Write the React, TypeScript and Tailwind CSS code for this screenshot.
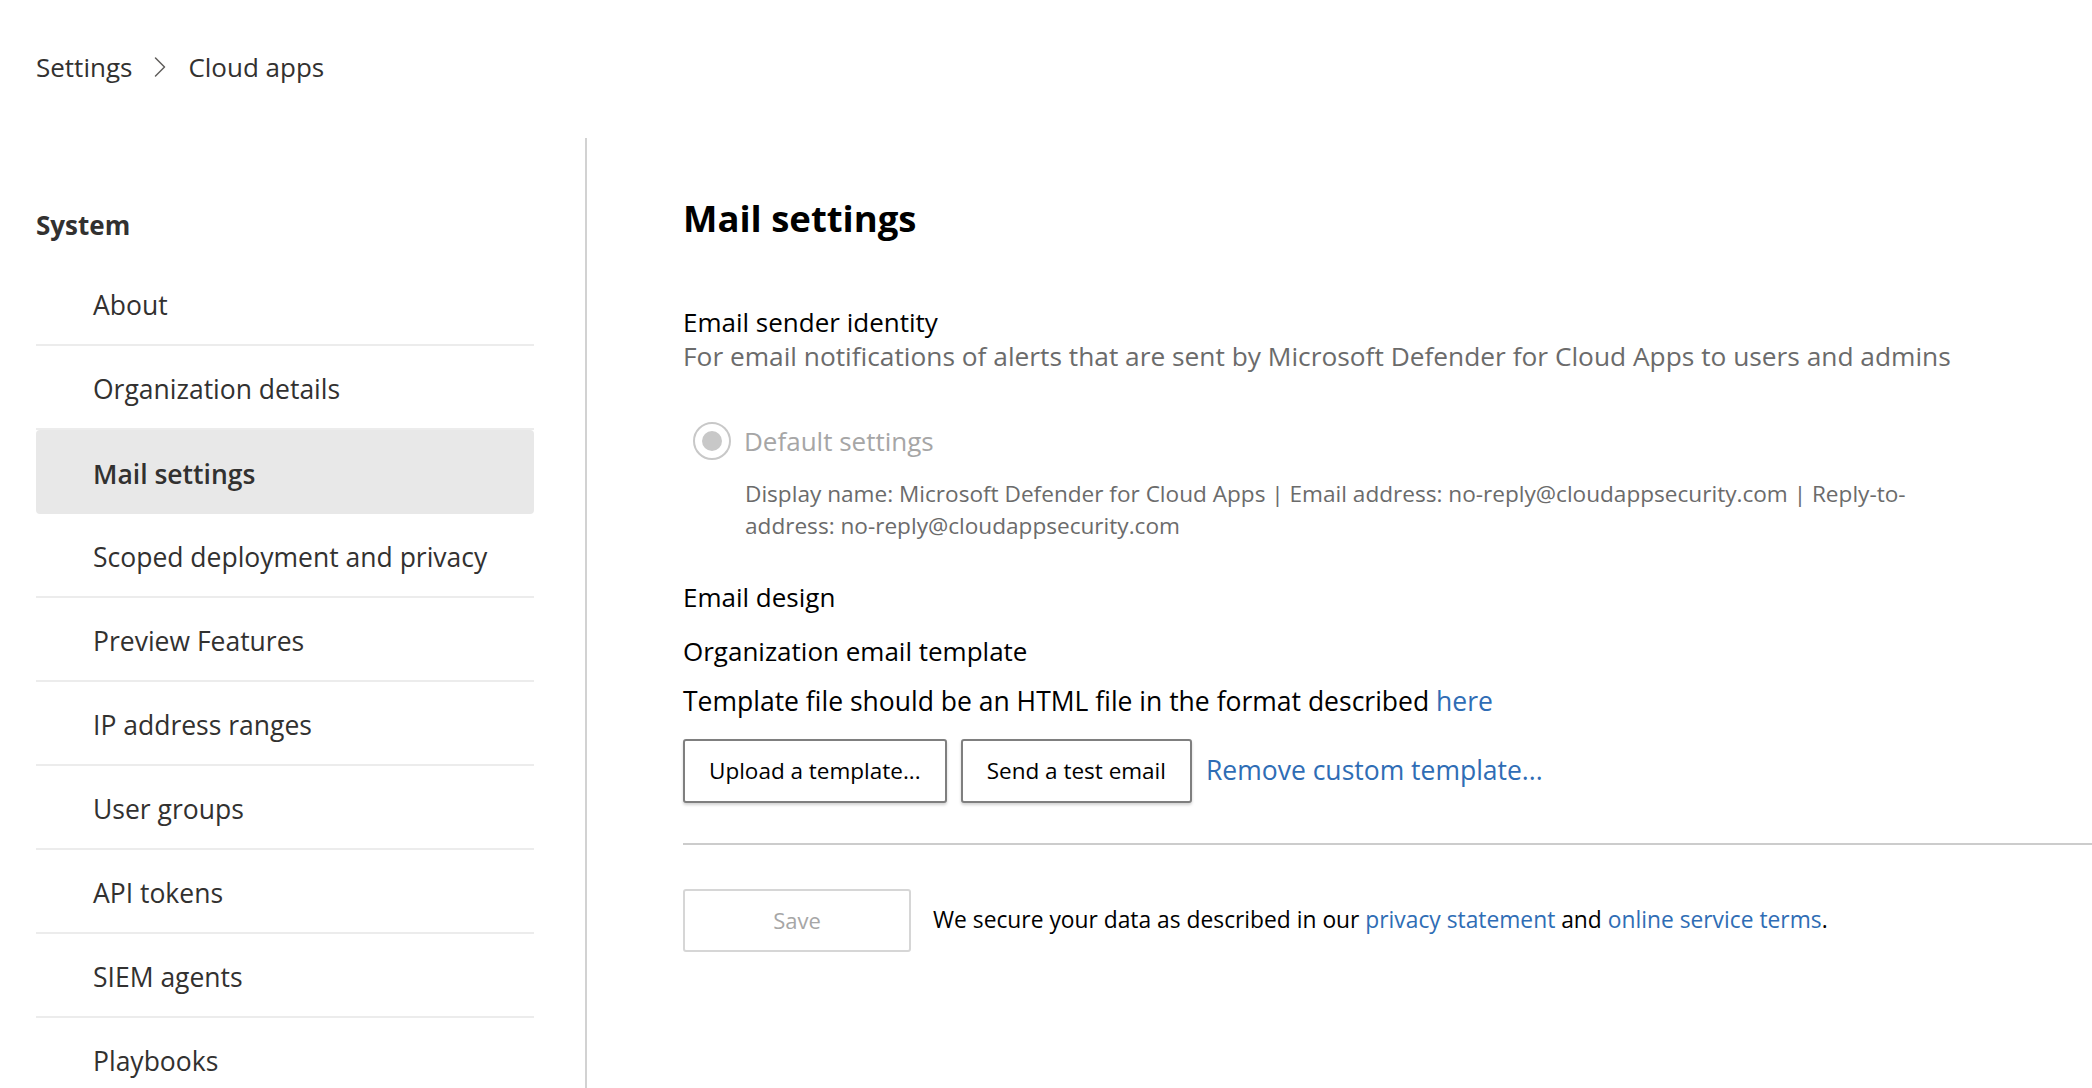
import { ChevronRight } from "lucide-react";

const navItems = [
  "About",
  "Organization details",
  "Mail settings",
  "Scoped deployment and privacy",
  "Preview Features",
  "IP address ranges",
  "User groups",
  "API tokens",
  "SIEM agents",
  "Playbooks",
];

function NavItem({ label, active }: { label: string; active?: boolean }) {
  return (
    <li
      className={
        active
          ? "h-[84px] flex items-center pl-[57px] pt-[5px] bg-[#e8e8e8] rounded-[4px] font-semibold text-[#323130]"
          : "h-[84px] flex items-center pl-[57px] pt-[5px] border-b-2 border-[#ececec] text-[#323130]"
      }
    >
      {label}
    </li>
  );
}

function Radio() {
  return (
    <span className="w-[38px] h-[38px] rounded-full border-2 border-[#c8c8c8] flex items-center justify-center shrink-0">
      <span className="w-[20px] h-[20px] rounded-full bg-[#c8c8c8]" />
    </span>
  );
}

export default function App() {
  return (
    <div className="min-h-screen bg-white text-black font-['Open_Sans',sans-serif] overflow-hidden">
      <header className="h-[138px] pb-[4px] pl-[36px] flex items-center gap-[10px] text-[26px] text-[#323130]">
        <span>Settings</span>
        <ChevronRight className="w-[36px] h-[36px] text-[#605e5c]" strokeWidth={1} />
        <span>Cloud apps</span>
      </header>

      <div className="flex">
        <aside className="w-[587px] shrink-0 border-r-2 border-[#d2d2d2] pl-[36px] pr-[51px]">
          <h2 className="mt-[69px] mb-[19px] leading-[36px] text-[26px] font-bold text-[#323130]">
            System
          </h2>
          <ul className="text-[26.5px]">
            {navItems.map((item) => (
              <NavItem key={item} label={item} active={item === "Mail settings"} />
            ))}
          </ul>
        </aside>

        <main className="flex-1 pl-[96px]">
          <h1 className="mt-[58px] leading-[44px] text-[36.5px] font-bold">Mail settings</h1>

          <section className="mt-[65px]">
            <h3 className="text-[26px] leading-[34px]">Email sender identity</h3>
            <p className="text-[26.3px] leading-[34px] text-[#6b6b6b]">
              For email notifications of alerts that are sent by Microsoft Defender for Cloud Apps to users and admins
            </p>

            <div className="mt-[48px] pl-[10px] flex items-center gap-[13px]">
              <Radio />
              <span className="text-[26px] text-[#a6a6a6] leading-[40px]">Default settings</span>
            </div>
            <p className="mt-[17px] pl-[62px] text-[22.6px] leading-[32px] text-[#6b6b6b]">
              Display name: Microsoft Defender for Cloud Apps | Email address: no-reply@cloudappsecurity.com | Reply-to-
              <br />
              address: no-reply@cloudappsecurity.com
            </p>
          </section>

          <section className="mt-[38px]">
            <h3 className="text-[26px] leading-[34px]">Email design</h3>
            <h4 className="mt-[20px] text-[26px] leading-[34px]">Organization email template</h4>
            <p className="mt-[16px] text-[26.5px] leading-[34px]">
              Template file should be an HTML file in the format described{" "}
              <a className="text-[#2f6db5]">here</a>
            </p>

            <div className="mt-[21px] flex items-center gap-[14px]">
              <button className="h-[64px] px-[24px] border-2 border-[#7f7f7f] rounded-[3px] shadow-[0_2px_3px_rgba(0,0,0,0.18)] text-[22.5px] bg-white">
                Upload a template...
              </button>
              <button className="h-[64px] px-[24px] border-2 border-[#7f7f7f] rounded-[3px] shadow-[0_2px_3px_rgba(0,0,0,0.18)] text-[22.5px] bg-white">
                Send a test email
              </button>
              <a className="text-[26.5px] text-[#2f6db5]">Remove custom template...</a>
            </div>
          </section>

          <hr className="mt-[40px] border-t-2 border-[#cccccc]" />

          <div className="mt-[44px] flex items-center gap-[22px]">
            <button className="w-[228px] h-[63px] border-2 border-[#d6d6d6] rounded-[3px] text-[22px] text-[#a6a6a6] bg-white">
              Save
            </button>
            <p className="text-[22.8px]">
              We secure your data as described in our{" "}
              <a className="text-[#2f6db5]">privacy statement</a> and{" "}
              <a className="text-[#2f6db5]">online service terms</a>.
            </p>
          </div>
        </main>
      </div>
    </div>
  );
}
